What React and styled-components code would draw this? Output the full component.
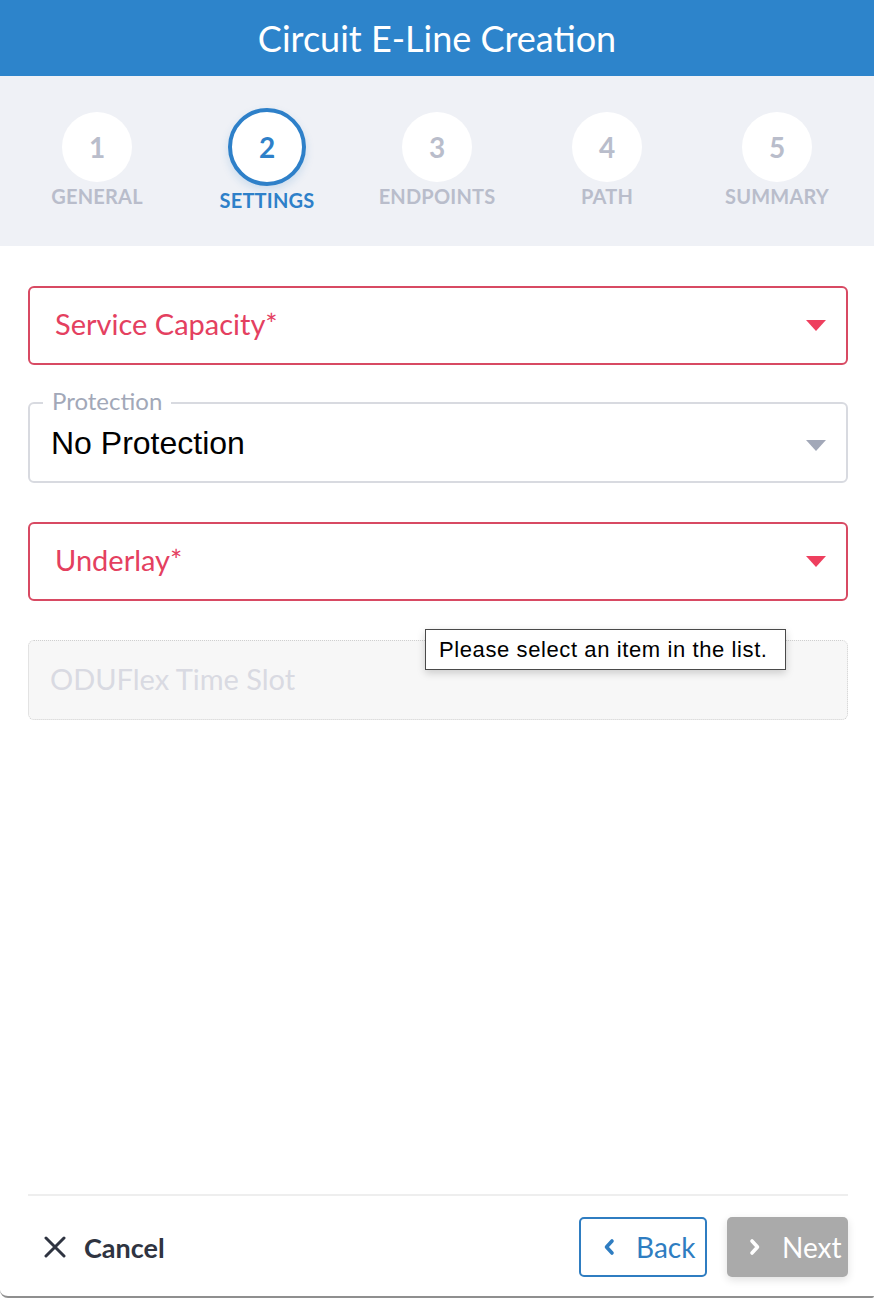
import React from "react";
import styled, { createGlobalStyle } from "styled-components";

const Global = createGlobalStyle`
  html, body { margin: 0; padding: 0; background: #fff; }
  body { font-family: Lato, "Noto Sans", sans-serif; }
  * { box-sizing: border-box; }
`;

const Page = styled.div`
  height: 100vh;
  display: flex;
  flex-direction: column;
  background: #fff;
  border-bottom: 2px solid #8f8f8f;
  border-bottom-left-radius: 8px;
  border-bottom-right-radius: 2px;
  overflow: hidden;
`;

const Header = styled.header`
  height: 76px;
  flex: none;
  background: #2d84cb;
  color: #fff;
  display: flex;
  align-items: center;
  justify-content: center;
  font-family: Lato, sans-serif;
  font-size: 36px;
  font-weight: 400;
`;

const Stepper = styled.nav`
  height: 170px;
  flex: none;
  background: #eff1f6;
  display: grid;
  grid-template-columns: repeat(5, 170px);
  padding: 0 12px;
  align-items: center;
`;

const Step = styled.div`
  display: flex;
  flex-direction: column;
  align-items: center;
  padding-bottom: 2px;
`;

const Circle = styled.div`
  width: ${(p) => (p.$active ? 78 : 70)}px;
  height: ${(p) => (p.$active ? 78 : 70)}px;
  border-radius: 50%;
  background: #fff;
  border: ${(p) => (p.$active ? "4px solid #2e80c9" : "none")};
  box-shadow: ${(p) => (p.$active ? "0 4px 8px rgba(46,128,201,0.18)" : "none")};
  display: flex;
  align-items: center;
  justify-content: center;
  font-size: 28px;
  font-weight: 700;
  color: ${(p) => (p.$active ? "#2e80c9" : "#b9bdcb")};
`;

const StepLabel = styled.div`
  margin-top: 2px;
  font-size: 20px;
  font-weight: 700;
  letter-spacing: 0.2px;
  color: ${(p) => (p.$active ? "#2e80c9" : "#b9bdcb")};
`;

const Form = styled.main`
  flex: 1;
  padding: 40px 26px 0 28px;
  display: flex;
  flex-direction: column;
  gap: 39px;
`;

const SelectBox = styled.div`
  height: 79px;
  border: 2px solid ${(p) => (p.$error ? "#d84a63" : "#d8dae0")};
  border-radius: 6px;
  display: flex;
  align-items: center;
  padding: 0 20px 4px 25px;
  position: relative;
`;

const Placeholder = styled.span`
  flex: 1;
  font-size: 29px;
  color: ${(p) => p.$color};
`;

const Arrow = styled.span`
  width: 0;
  height: 0;
  margin-top: ${(p) => p.$mt || 4}px;
  border-left: 10px solid transparent;
  border-right: 10px solid transparent;
  border-top: 11px solid ${(p) => p.$color};
`;

const FieldSet = styled.fieldset`
  margin: -14px 0 0;
  height: 93px;
  border: 2px solid #d8dae0;
  border-radius: 6px;
  padding: 9px 20px 0 21px;
  display: flex;
  align-items: center;
`;

const Legend = styled.legend`
  padding: 0 9px;
  margin-left: -8px;
  font-size: 24px;
  color: #a2a8b8;
  line-height: 26px;
  position: relative;
  top: -2px;
`;

const Value = styled.span`
  flex: 1;
  font-family: "Liberation Sans", Arial, sans-serif;
  font-size: 32px;
  color: #000;
`;

const Disabled = styled.div`
  height: 80px;
  border: 1px dotted #cfcfcf;
  border-radius: 6px;
  background: #f7f7f7;
  display: flex;
  align-items: center;
  padding: 0 22px 4px 21px;
  position: relative;
`;

const Tooltip = styled.div`
  position: absolute;
  left: 396px;
  top: -12px;
  width: 361px;
  height: 41px;
  background: #fff;
  border: 1px solid #4a4a4a;
  box-shadow: 0 3px 8px rgba(0,0,0,0.18);
  display: flex;
  align-items: center;
  padding-left: 13px;
  font-family: "Liberation Sans", Arial, sans-serif;
  font-size: 22px;
  letter-spacing: 0.6px;
  color: #000;
  white-space: nowrap;
`;

const Footer = styled.footer`
  flex: none;
  margin: 0 26px 0 28px;
  border-top: 2px solid #eeeeee;
  padding: 21px 0 19px;
  display: flex;
  align-items: center;
`;

const CancelButton = styled.button`
  border: none;
  background: none;
  display: flex;
  align-items: center;
  gap: 18px;
  padding: 0 0 0 16px;
  font-family: Lato, sans-serif;
  font-size: 27px;
  font-weight: 700;
  color: #2f3441;
  cursor: pointer;
`;

const Spacer = styled.div`
  flex: 1;
`;

const NavButton = styled.button`
  height: 60px;
  width: ${(p) => p.$w}px;
  margin-left: ${(p) => p.$ml || 0}px;
  border-radius: 5px;
  border: ${(p) => (p.$primary ? "none" : "2px solid #2f7dc1")};
  background: ${(p) => (p.$primary ? "#aaaaaa" : "#fff")};
  color: ${(p) => (p.$primary ? "#fff" : "#2f7dc1")};
  box-shadow: ${(p) => (p.$primary ? "0 3px 8px rgba(0,0,0,0.12)" : "none")};
  display: flex;
  align-items: center;
  gap: 21px;
  padding: 0 0 0 ${(p) => p.$pl}px;
  font-family: Lato, sans-serif;
  font-size: 28px;
  font-weight: 400;
  cursor: pointer;
`;

const Chevron = ({ dir, color }) => (
  <svg width="12" height="18" viewBox="0 0 12 18" fill="none">
    <path
      d={dir === "left" ? "M9 3 L3.5 9 L9 15" : "M3 3 L8.5 9 L3 15"}
      stroke={color}
      strokeWidth="3.6"
      strokeLinecap="round"
      strokeLinejoin="round"
    />
  </svg>
);

const XIcon = () => (
  <svg width="22" height="22" viewBox="0 0 22 22">
    <path d="M2 2 L20 20 M20 2 L2 20" stroke="#2f3441" strokeWidth="3" strokeLinecap="round" />
  </svg>
);

const steps = ["GENERAL", "SETTINGS", "ENDPOINTS", "PATH", "SUMMARY"];

export default function App() {
  return (
    <>
      <Global />
      <Page>
        <Header>Circuit E-Line Creation</Header>
        <Stepper>
          {steps.map((s, i) => (
            <Step key={s}>
              <Circle $active={i === 1}>{i + 1}</Circle>
              <StepLabel $active={i === 1}>{s}</StepLabel>
            </Step>
          ))}
        </Stepper>
        <Form>
          <SelectBox $error>
            <Placeholder $color="#e4405f">Service Capacity*</Placeholder>
            <Arrow $color="#ee3f5e" />
          </SelectBox>
          <FieldSet>
            <Legend>Protection</Legend>
            <Value>No Protection</Value>
            <Arrow $color="#a2a8b8" $mt={0} />
          </FieldSet>
          <SelectBox $error>
            <Placeholder $color="#e4405f">Underlay*</Placeholder>
            <Arrow $color="#ee3f5e" />
          </SelectBox>
          <Disabled>
            <Placeholder $color="#d9dae2">ODUFlex Time Slot</Placeholder>
            <Tooltip>Please select an item in the list.</Tooltip>
          </Disabled>
        </Form>
        <Footer>
          <CancelButton>
            <XIcon />
            Cancel
          </CancelButton>
          <Spacer />
          <NavButton $w={128} $pl={22}>
            <Chevron dir="left" color="#2f7dc1" />
            Back
          </NavButton>
          <NavButton $primary $w={121} $ml={20} $pl={22}>
            <Chevron dir="right" color="#fff" />
            Next
          </NavButton>
        </Footer>
      </Page>
    </>
  );
}
